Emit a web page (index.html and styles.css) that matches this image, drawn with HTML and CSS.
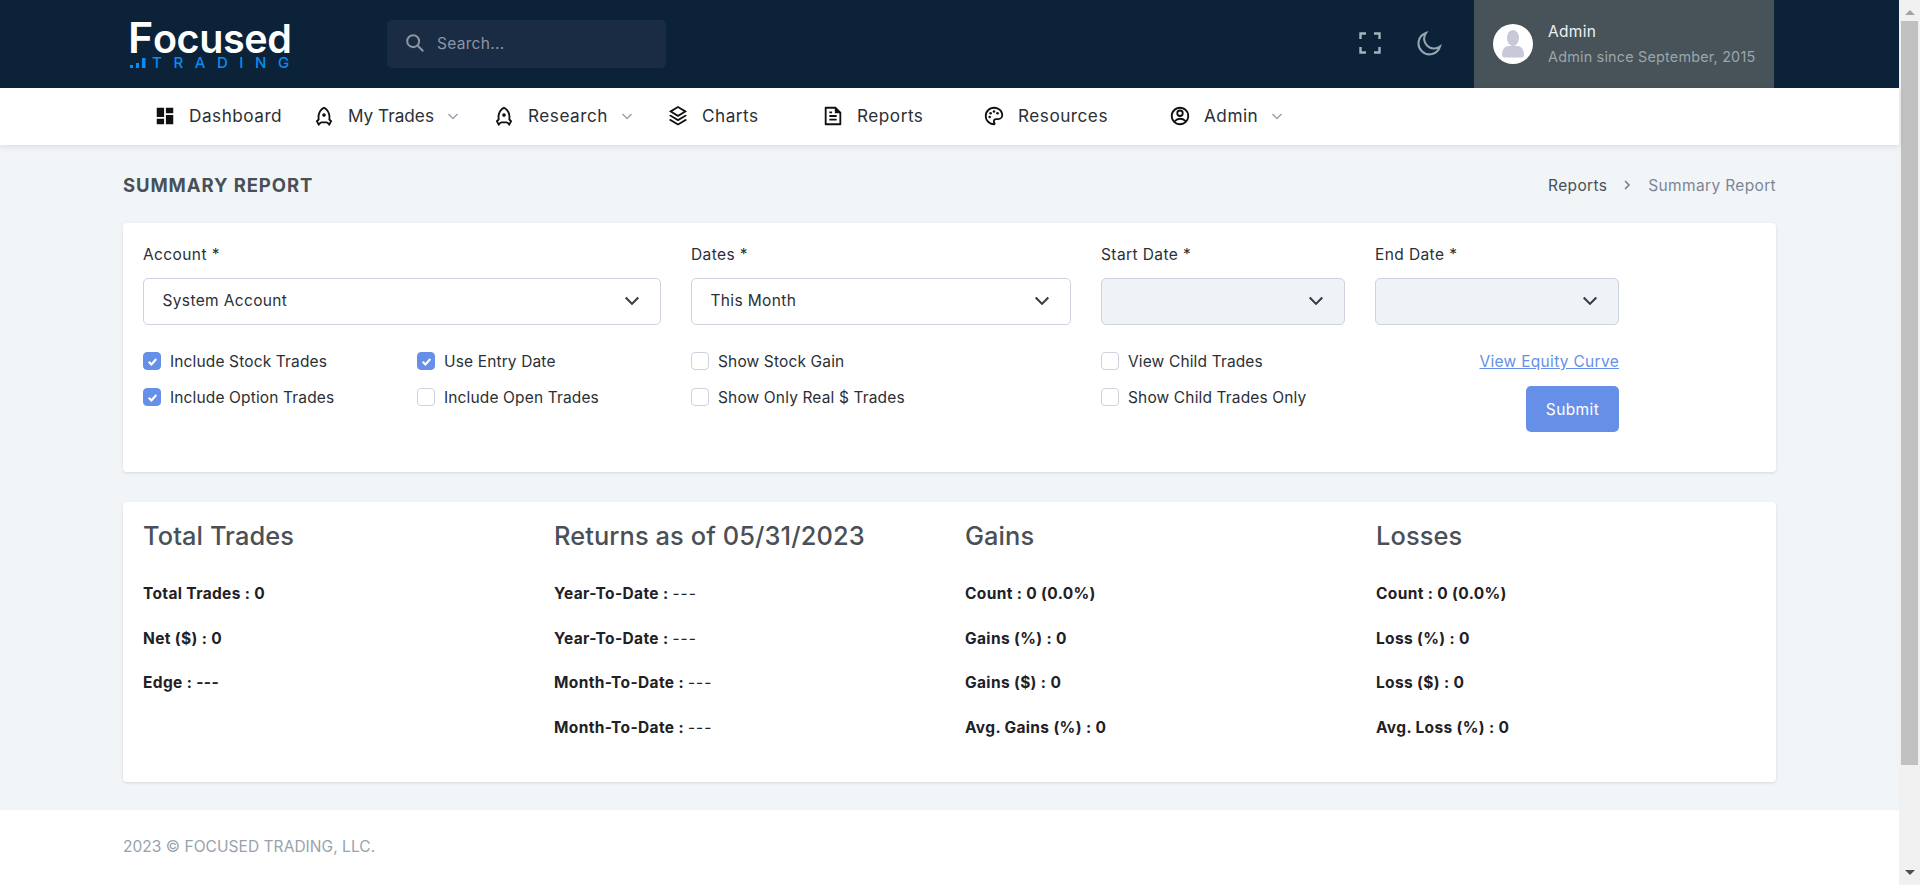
FILE: index.html
```html
<!DOCTYPE html>
<html lang="en">
<head>
<meta charset="utf-8">
<title>Summary Report</title>
<link rel="stylesheet" href="styles.css">
</head>
<body>
<div class="app">
  <header class="topbar">
    <a class="logo">
      <span class="logo-word">Focused</span>
      <span class="logo-sub">
        <svg class="logo-bars" viewBox="0 0 18 11"><rect x="0" y="8" width="3" height="3"/><rect x="6" y="6" width="3" height="5"/><rect x="12" y="1" width="3.500" height="10"/></svg>
        <span class="logo-trading">TRADING</span>
      </span>
    </a>
    <div class="search">
      <svg class="search-icon" viewBox="0 0 24 24"><circle cx="10" cy="10" r="6.500"/><path d="M15 15l6 6"/></svg>
      <span>Search...</span>
    </div>
    <div class="top-icons">
      <svg class="top-icon" viewBox="0 0 24 24"><path d="M8 2.500H2.500V8M16 2.500h5.500V8M21.500 16v5.500H16M8 21.500H2.500V16"/></svg>
      <svg class="top-icon moon" viewBox="0 0 24 24"><path d="M22 15A10.500 10.500 0 1 1 8.500 2a9.500 9.500 0 0 0 13.500 13z"/></svg>
    </div>
    <div class="user-panel">
      <div class="avatar">
        <svg viewBox="0 0 40 46"><ellipse cx="20" cy="17" rx="6" ry="8"/><path d="M9 34c0-6 3-8.500 6-9h10c3 .5 6 3 6 9 0 1.500-1 2.500-2 2.500H11c-1 0-2-1-2-2.500z"/></svg>
      </div>
      <div class="user-text">
        <div class="user-name">Admin</div>
        <div class="user-sub">Admin since September, 2015</div>
      </div>
    </div>
  </header>

  <nav class="mainnav">
    <a class="nav-item"><svg class="nav-icon" viewBox="0 0 24 24"><path d="M3 3h8v10H3zM13 3h8v6h-8zM3 15h8v6H3zM13 11h8v10h-8z"/></svg><span>Dashboard</span></a>
    <a class="nav-item tight"><svg class="nav-icon" viewBox="0 0 24 24"><path d="M5 13c0-5.088 2.903-9.436 7-11.182C16.097 3.564 19 7.912 19 13c0 .823-.076 1.626-.22 2.403l1.940 1.832a.5.5 0 0 1 .095.603l-2.495 4.575a.5.5 0 0 1-.793.114l-2.234-2.234a1 1 0 0 0-.707-.293H9.414a1 1 0 0 0-.707.293l-2.234 2.234a.5.5 0 0 1-.793-.114l-2.495-4.575a.5.5 0 0 1 .095-.603l1.940-1.832C5.077 14.626 5 13.823 5 13zm1.476 6.696l.817-.817A3 3 0 0 1 9.414 18h5.172a3 3 0 0 1 2.121.879l.817.817.982-1.800-1.100-1.040a2 2 0 0 1-.593-1.820c.124-.664.187-1.345.187-2.036 0-3.870-1.995-7.300-5-8.960C8.995 5.700 7 9.130 7 13c0 .691.063 1.372.187 2.037a2 2 0 0 1-.593 1.820l-1.100 1.039.982 1.800zM12 13a2 2 0 1 1 0-4 2 2 0 0 1 0 4z"/></svg><span>My Trades</span><svg class="nav-caret" viewBox="0 0 12 12"><path d="M1.500 4L6 8.500 10.500 4"/></svg></a>
    <a class="nav-item"><svg class="nav-icon" viewBox="0 0 24 24"><path d="M5 13c0-5.088 2.903-9.436 7-11.182C16.097 3.564 19 7.912 19 13c0 .823-.076 1.626-.22 2.403l1.940 1.832a.5.5 0 0 1 .095.603l-2.495 4.575a.5.5 0 0 1-.793.114l-2.234-2.234a1 1 0 0 0-.707-.293H9.414a1 1 0 0 0-.707.293l-2.234 2.234a.5.5 0 0 1-.793-.114l-2.495-4.575a.5.5 0 0 1 .095-.603l1.940-1.832C5.077 14.626 5 13.823 5 13zm1.476 6.696l.817-.817A3 3 0 0 1 9.414 18h5.172a3 3 0 0 1 2.121.879l.817.817.982-1.800-1.100-1.040a2 2 0 0 1-.593-1.820c.124-.664.187-1.345.187-2.036 0-3.870-1.995-7.300-5-8.960C8.995 5.700 7 9.130 7 13c0 .691.063 1.372.187 2.037a2 2 0 0 1-.593 1.820l-1.100 1.039.982 1.800zM12 13a2 2 0 1 1 0-4 2 2 0 0 1 0 4z"/></svg><span>Research</span><svg class="nav-caret" viewBox="0 0 12 12"><path d="M1.500 4L6 8.500 10.500 4"/></svg></a>
    <a class="nav-item"><svg class="nav-icon" viewBox="0 0 24 24"><path d="M20.083 15.200l1.202.721a.5.5 0 0 1 0 .858l-8.770 5.262a1 1 0 0 1-1.030 0l-8.770-5.262a.5.5 0 0 1 0-.858l1.202-.721L12 20.050l8.083-4.850zm0-4.700l1.202.721a.5.5 0 0 1 0 .858L12 17.650l-9.285-5.571a.5.5 0 0 1 0-.858l1.202-.721L12 15.350l8.083-4.850zm-7.569-9.191l8.771 5.262a.5.5 0 0 1 0 .858L12 13 2.715 7.429a.5.5 0 0 1 0-.858l8.770-5.262a1 1 0 0 1 1.030 0zM12 3.332L5.887 7 12 10.668 18.113 7 12 3.332z"/></svg><span>Charts</span></a>
    <a class="nav-item"><svg class="nav-icon" viewBox="0 0 24 24"><path d="M21 8v12.993A1 1 0 0 1 20.007 22H3.993A.993.993 0 0 1 3 21.008V2.992C3 2.455 3.449 2 4.002 2h10.995L21 8zm-2 1h-5V4H5v16h14V9zM8 7h3v2H8V7zm0 4h8v2H8v-2zm0 4h8v2H8v-2z"/></svg><span>Reports</span></a>
    <a class="nav-item"><svg class="nav-icon" viewBox="0 0 24 24"><path d="M12 2c5.522 0 10 3.978 10 8.889a5.558 5.558 0 0 1-5.556 5.555h-1.966c-.922 0-1.667.745-1.667 1.667 0 .422.167.811.422 1.100.267.300.434.689.434 1.122C13.667 21.256 12.900 22 12 22 6.478 22 2 17.522 2 12S6.478 2 12 2zm-1.189 16.111a3.664 3.664 0 0 1 3.667-3.667h1.966A3.558 3.558 0 0 0 20 10.889C20 7.139 16.468 4 12 4a8 8 0 0 0-.676 15.972 3.648 3.648 0 0 1-.513-1.860z"/><circle cx="7.300" cy="13" r="1.400"/><circle cx="8.300" cy="9" r="1.400"/><circle cx="12" cy="7" r="1.400"/><circle cx="15.800" cy="9" r="1.400"/></svg><span>Resources</span></a>
    <a class="nav-item"><svg class="nav-icon" viewBox="0 0 24 24"><path d="M12 22C6.477 22 2 17.523 2 12S6.477 2 12 2s10 4.477 10 10-4.477 10-10 10zm-4.987-3.744A7.966 7.966 0 0 0 12 20c1.970 0 3.773-.712 5.167-1.892A6.979 6.979 0 0 0 12.160 16a6.981 6.981 0 0 0-5.147 2.256zM5.616 16.820A8.975 8.975 0 0 1 12.160 14a8.972 8.972 0 0 1 6.362 2.634 8 8 0 1 0-12.906.187zM12 13a4 4 0 1 1 0-8 4 4 0 0 1 0 8zm0-2a2 2 0 1 0 0-4 2 2 0 0 0 0 4z"/></svg><span>Admin</span><svg class="nav-caret" viewBox="0 0 12 12"><path d="M1.500 4L6 8.500 10.500 4"/></svg></a>
  </nav>

  <main class="content">
    <div class="page-head">
      <h1 class="page-title">SUMMARY REPORT</h1>
      <div class="crumbs">
        <span class="crumb-link">Reports</span>
        <svg class="crumb-sep" viewBox="0 0 10 12"><path d="M3 2l4 4-4 4"/></svg>
        <span class="crumb-current">Summary Report</span>
      </div>
    </div>

    <section class="card filter-card">
      <div class="fields">
        <div class="field">
          <label class="field-label">Account *</label>
          <div class="select">System Account<svg class="select-caret" viewBox="0 0 14 14"><path d="M1.500 4l5.500 5.500L12.500 4"/></svg></div>
        </div>
        <div class="field">
          <label class="field-label">Dates *</label>
          <div class="select">This Month<svg class="select-caret" viewBox="0 0 14 14"><path d="M1.500 4l5.500 5.500L12.500 4"/></svg></div>
        </div>
        <div class="field">
          <label class="field-label">Start Date *</label>
          <div class="select disabled"><svg class="select-caret" viewBox="0 0 14 14"><path d="M1.500 4l5.500 5.500L12.500 4"/></svg></div>
        </div>
        <div class="field">
          <label class="field-label">End Date *</label>
          <div class="select disabled"><svg class="select-caret" viewBox="0 0 14 14"><path d="M1.500 4l5.500 5.500L12.500 4"/></svg></div>
        </div>
      </div>
      <div class="options">
        <div class="check-col">
          <div class="check"><span class="box on"><svg viewBox="0 0 12 12"><path d="M2.500 6.200l2.500 2.500 4.500-5"/></svg></span>Include Stock Trades</div>
          <div class="check"><span class="box on"><svg viewBox="0 0 12 12"><path d="M2.500 6.200l2.500 2.500 4.500-5"/></svg></span>Include Option Trades</div>
        </div>
        <div class="check-col">
          <div class="check"><span class="box on"><svg viewBox="0 0 12 12"><path d="M2.500 6.200l2.500 2.500 4.500-5"/></svg></span>Use Entry Date</div>
          <div class="check"><span class="box"></span>Include Open Trades</div>
        </div>
        <div class="check-col">
          <div class="check"><span class="box"></span>Show Stock Gain</div>
          <div class="check"><span class="box"></span>Show Only Real $ Trades</div>
        </div>
        <div class="check-col">
          <div class="check"><span class="box"></span>View Child Trades</div>
          <div class="check"><span class="box"></span>Show Child Trades Only</div>
        </div>
        <div class="actions">
          <a class="equity-link">View Equity Curve</a>
          <button class="submit" type="button">Submit</button>
        </div>
      </div>
    </section>

    <section class="card stats-card">
      <div class="stat-col">
        <h2 class="stat-title">Total Trades</h2>
        <p class="stat">Total Trades : 0</p>
        <p class="stat">Net ($) : 0</p>
        <p class="stat">Edge : ---</p>
      </div>
      <div class="stat-col">
        <h2 class="stat-title">Returns as of 05/31/2023</h2>
        <p class="stat">Year-To-Date : <span class="stat-val">---</span></p>
        <p class="stat">Year-To-Date : <span class="stat-val">---</span></p>
        <p class="stat">Month-To-Date : <span class="stat-val">---</span></p>
        <p class="stat">Month-To-Date : <span class="stat-val">---</span></p>
      </div>
      <div class="stat-col">
        <h2 class="stat-title">Gains</h2>
        <p class="stat">Count : 0 (0.0%)</p>
        <p class="stat">Gains (%) : 0</p>
        <p class="stat">Gains ($) : 0</p>
        <p class="stat">Avg. Gains (%) : 0</p>
      </div>
      <div class="stat-col">
        <h2 class="stat-title">Losses</h2>
        <p class="stat">Count : 0 (0.0%)</p>
        <p class="stat">Loss (%) : 0</p>
        <p class="stat">Loss ($) : 0</p>
        <p class="stat">Avg. Loss (%) : 0</p>
      </div>
    </section>
  </main>

  <footer class="footer">2023 © FOCUSED TRADING, LLC.</footer>
</div>
<aside class="scrollbar">
  <span class="arrow up"></span>
  <span class="thumb"></span>
  <span class="arrow down"></span>
</aside>
</body>
</html>
```
FILE: styles.css
```css
* { box-sizing: border-box; }
html, body { height: 100%; }
body {
  margin: 0;
  display: flex;
  height: 885px;
  overflow: hidden;
  background: #fff;
  font-family: Inter, "Liberation Sans", sans-serif;
  font-size: 15px;
  color: #212529;
}
.app { flex: 1; min-width: 0; display: flex; flex-direction: column; height: 885px; background: #f2f5f8; }

/* scrollbar */
.scrollbar { width: 21px; flex: none; background: #f1f1f1; display: flex; flex-direction: column; align-items: center; }
.thumb { width: 17px; height: 744px; background: #c1c1c1; margin-top: 6px; }
.arrow { width: 0; height: 0; border-left: 5px solid transparent; border-right: 5px solid transparent; }
.arrow.up { border-bottom: 5px solid #a3a3a3; margin-top: 10px; }
.arrow.down { border-top: 5px solid #505050; margin-top: auto; margin-bottom: 10px; }

/* top bar */
.topbar { height: 88px; flex: none; background: #0b2239; display: flex; align-items: center; padding-left: 128px; }
.logo { width: 163px; height: 48px; display: flex; flex-direction: column; margin-top: 1px; }
.logo-word { font-family: Inter, sans-serif; font-weight: 600; font-size: 39.500px; line-height: 32px; height: 32px; color: #fff; letter-spacing: -.4px; white-space: nowrap; }
.logo-word::first-letter { font-size: 43px; }
.logo-sub { display: flex; align-items: center; height: 11px; margin-top: 4px; padding-left: 2px; }
.logo-bars { width: 18px; height: 11px; fill: #0a8cf0; flex: none; }
.logo-trading { font-family: Inter, sans-serif; font-weight: 500; font-size: 15px; line-height: 11px; color: #0a8cf0; letter-spacing: 11.600px; white-space: nowrap; margin-left: 4px; }
.search { margin-left: 96px; width: 279px; height: 48px; background: #1a2c44; border-radius: 5px; display: flex; align-items: center; padding-left: 17px; padding-bottom: 2px; color: #8c95a2; font-size: 15.500px; letter-spacing: .3px; }
.search-icon { width: 22px; height: 22px; fill: none; stroke: #8c95a2; stroke-width: 2.200; margin-right: 11px; }
.top-icons { margin-left: auto; display: flex; align-items: center; gap: 35px; margin-right: 32px; padding-bottom: 2px; }
.top-icon { width: 24px; height: 24px; fill: none; stroke: #a4b4bf; stroke-width: 2.400; }
.moon { stroke: #94a5b0; stroke-width: 2; width: 25px; height: 25px; }
.user-panel { width: 300px; height: 88px; background: #475359; display: flex; align-items: center; padding-left: 19px; margin-right: 125px; }
.avatar { width: 40px; height: 40px; border-radius: 50%; background: #fff; flex: none; overflow: hidden; }
.avatar svg { width: 40px; height: 46px; fill: #c9c8d8; display: block; margin-top: -3px; }
.user-text { margin-left: 15px; padding-bottom: 1px; }
.user-name { font-size: 15.500px; line-height: 20px; color: #eef1f3; font-weight: 400; letter-spacing: .3px; margin-bottom: 5px; margin-top: 2px; }
.user-sub { font-size: 14.400px; line-height: 20px; color: #9aa6ac; white-space: nowrap; letter-spacing: .2px; }

/* nav */
.mainnav { height: 57px; flex: none; background: #fff; box-shadow: 0 2px 6px rgba(50, 60, 90, .12); display: grid; grid-template-columns: 159px 180px 174px 155px 161px 186px 200px; align-items: center; padding-left: 156px; padding-bottom: 2px; position: relative; }
.nav-item { display: flex; align-items: center; color: #2b2f36; font-size: 17.200px; letter-spacing: .5px; }
.nav-item.tight { letter-spacing: 0; }
.nav-icon { width: 22px; height: 22px; fill: #111; margin-left: -2px; margin-right: 13px; flex: none; }
.nav-caret { width: 12px; height: 12px; fill: none; stroke: #9aa3b2; stroke-width: 1.500; margin-left: 13px; }

/* content */
.content { flex: 1; padding: 0 123px; }
.page-head { height: 78px; display: flex; justify-content: space-between; align-items: center; padding-top: 2px; }
.page-title { margin: 0; font-size: 18.500px; font-weight: 700; color: #495057; letter-spacing: .9px; }
.crumbs { display: flex; align-items: center; font-size: 15.500px; letter-spacing: .35px; }
.crumb-link { color: #495057; }
.crumb-sep { width: 10px; height: 12px; fill: none; stroke: #74788d; stroke-width: 1.500; margin: 0 16px 0 15px; }
.crumb-current { color: #7d8594; }
.card { background: #fff; border-radius: 4px; box-shadow: 0 1px 3px rgba(50, 60, 90, .16); }
.filter-card { height: 249px; padding: 21px 20px 20px; margin-bottom: 30px; }
.fields { display: grid; grid-template-columns: 518px 380px 244px 244px; column-gap: 30px; }
.field-label { display: block; font-size: 15.500px; line-height: 22px; color: #2b2f36; margin-bottom: 12px; letter-spacing: .4px; }
.select { height: 47px; border: 1px solid #ced1de; border-radius: 5px; display: flex; align-items: center; justify-content: space-between; padding: 0 20px 2px 18.500px; font-size: 15.500px; letter-spacing: .35px; color: #2b2f36; background: #fff; }
.select.disabled { background: #eff2f7; justify-content: flex-end; }
.select-caret { width: 16px; height: 16px; fill: none; stroke: #343a40; stroke-width: 1.800; }
.options { display: grid; grid-template-columns: 274px 274px 410px 274px 244px; margin-top: 26px; }
.check-col { display: flex; flex-direction: column; gap: 16px; }
.check { display: flex; align-items: center; height: 20px; font-size: 15.500px; letter-spacing: .14px; color: #2b2f36; white-space: nowrap; }
.box { width: 18px; height: 18px; border: 1px solid #ced1de; border-radius: 4px; margin-right: 9px; background: #fff; flex: none; display: flex; align-items: center; justify-content: center; }
.box.on { background: #6690e8; border-color: #6690e8; }
.box svg { width: 13px; height: 13px; fill: none; stroke: #fff; stroke-width: 2; }
.actions { display: flex; flex-direction: column; align-items: flex-end; padding-top: 1px; }
.equity-link { height: 20px; line-height: 20px; font-size: 15.500px; letter-spacing: .3px; color: #6690e8; text-decoration: underline; }
.submit { margin-top: 14px; width: 93px; height: 46px; border: 0; border-radius: 5px; background: #6690e8; color: #fff; font: 400 15.500px Inter, sans-serif; letter-spacing: .4px; }
.stats-card { height: 280px; padding: 17px 20px 0; display: grid; grid-template-columns: repeat(4, 411px); }
.stat-title { margin: 0 0 21px; height: 34px; font-family: Inter, sans-serif; font-size: 25.400px; font-weight: 500; line-height: 34px; letter-spacing: .1px; color: #495057; }
.stat { margin: 0; height: 44.700px; line-height: 24px; padding-top: 8px; font-weight: 700; font-size: 15.500px; letter-spacing: .35px; color: #1e2126; }
.stat-val { font-weight: 400; letter-spacing: 1px; }
.footer { height: 75px; flex: none; background: #fff; padding-left: 123px; padding-bottom: 3px; display: flex; align-items: center; font-size: 15.500px; letter-spacing: .05px; color: #98a2ad; }
```
